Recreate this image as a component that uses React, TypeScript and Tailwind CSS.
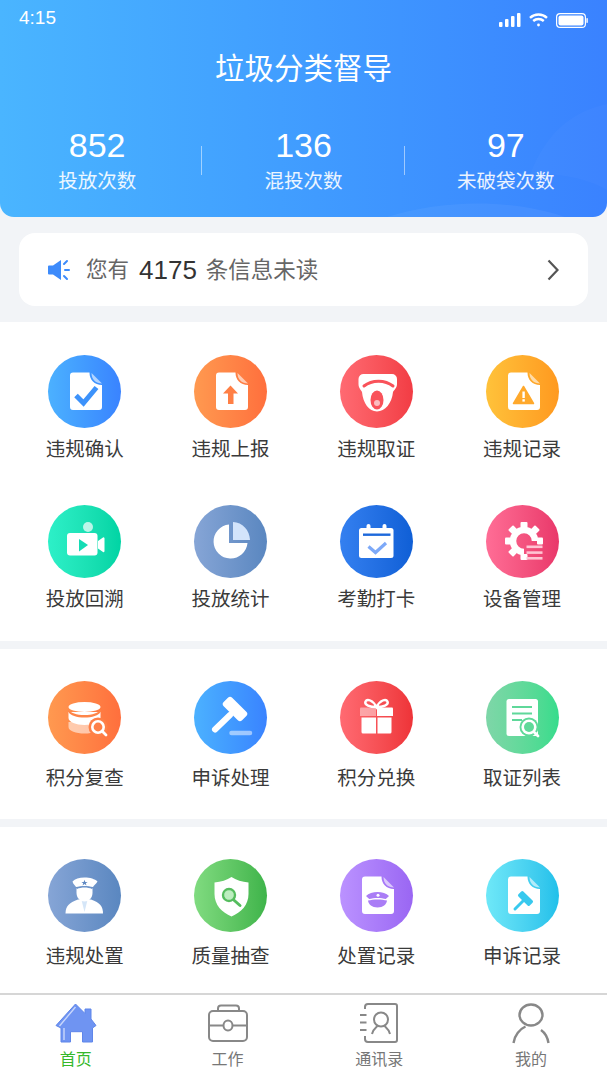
import React from 'react';

const Doc = ({ children }: { children?: React.ReactNode }) => (
  <>
    <path d="M25 17.5H41.5C41.5 25 46.5 30 54 30V52a3 3 0 0 1-3 3H25a3 3 0 0 1-3-3V20.5a3 3 0 0 1 3-3z" fill="#fff" />
    <path d="M43.5 18L54 28.5C48 28.5 43.5 24.5 43.5 18z" fill="#fff" opacity="0.6" />
    {children}
  </>
);

const gearTeeth = [0, 45, 90, 180, 225, 270, 315];

const icons: Record<string, React.ReactNode> = {
  confirm: (
    <Doc>
      <path d="M28 40.5L35.5 48L48.5 32.5" fill="none" stroke="#3c92fb" strokeWidth="5" />
    </Doc>
  ),
  upload: (
    <Doc>
      <path d="M36.5 30.5L44 38.5H39.5V49H34V38.5H29z" fill="#ff7f45" />
    </Doc>
  ),
  camera: (
    <>
      <path d="M24 19H52a5 5 0 0 1 5 5V29C57 33 54 35 53 37C52 48 45 56.5 37 56.5C29 56.5 23 48 22 37C21 35 18.5 33 18.5 29V24a5 5 0 0 1 5.5-5z" fill="#fff" />
      <path d="M24 31C32 24.5 45 24.5 53 31" fill="none" stroke="#f9525a" strokeWidth="3" strokeLinecap="round" />
      <ellipse cx="37" cy="45" rx="6.5" ry="9.5" fill="#f9525a" />
      <circle cx="37" cy="48" r="3" fill="#fbbcbf" />
    </>
  ),
  warn: (
    <>
      <Doc />
      <path d="M37.5 31.5L47.5 48.5H27.5z" fill="#ffa92c" stroke="#ffa92c" strokeWidth="1.5" strokeLinejoin="round" />
      <rect x="36.4" y="36.5" width="2.4" height="6.5" fill="#fff" />
      <rect x="36.4" y="44.2" width="2.4" height="2.4" fill="#fff" />
    </>
  ),
  video: (
    <>
      <circle cx="40" cy="22" r="5" fill="#fff" opacity="0.7" />
      <rect x="19" y="28" width="30.5" height="22.5" rx="3" fill="#fff" />
      <path d="M50 36L55 32.5a1 1 0 0 1 1.5 1V46a1 1 0 0 1-1.5 1L50 43.5z" fill="#fff" />
      <path d="M31 34V46.5L40 40z" fill="#14dcb4" />
    </>
  ),
  pie: (
    <>
      <path d="M35 19.5V38H53.5A17 17 0 1 1 35 19.5z" fill="#fff" />
      <path d="M39 17C48.5 17.5 55.5 25 56 35H39z" fill="#d3e4fb" />
    </>
  ),
  calendar: (
    <>
      <path d="M21.5 23H51a2.5 2.5 0 0 1 2.5 2.5V50.5a2.5 2.5 0 0 1-2.5 2.5H21.5a2.5 2.5 0 0 1-2.5-2.5V25.5a2.5 2.5 0 0 1 2.5-2.5z" fill="#fff" />
      <rect x="26.5" y="19" width="4" height="8" rx="2" fill="#fff" />
      <rect x="42.5" y="19" width="4" height="8" rx="2" fill="#fff" />
      <rect x="23" y="28.5" width="27.5" height="2.4" fill="#1d69db" />
      <path d="M28.5 41.5L35.5 47.5L46 38" fill="none" stroke="#7da9f8" strokeWidth="3.2" />
    </>
  ),
  gear: (
    <>
      <path d="M38 47A11 11 0 1 1 49 36" fill="none" stroke="#fff" strokeWidth="6.5" />
      {gearTeeth.map((a) => (
        <rect key={a} x="34.5" y="17" width="7" height="6" rx="1" fill="#fff" transform={`rotate(${a} 38 36)`} />
      ))}
      <rect x="40.5" y="40.5" width="16" height="2.6" fill="#ffc4d3" />
      <rect x="40.5" y="46.3" width="16" height="2.6" fill="#ffc4d3" />
      <rect x="40.5" y="52" width="16" height="2.6" fill="#ffc4d3" />
    </>
  ),
  database: (
    <>
      <path d="M20.5 41V46C20.5 50 28 52.5 36.5 52.5S52.5 50 52.5 46V41z" fill="#fff" opacity="0.55" />
      <path d="M20.5 31V37C20.5 41 28 44 36.5 44S52.5 41 52.5 37V31z" fill="#fff" />
      <ellipse cx="36.5" cy="26" rx="16" ry="5" fill="#fff" />
      <path d="M20.5 28.5C22 32 29 34 36.5 34S51 32 52.5 28.5V31C51 34.5 44 36.5 36.5 36.5S22 34.5 20.5 31z" fill="#fe8549" />
      <circle cx="50" cy="46" r="9.5" fill="#fe8047" />
      <circle cx="50" cy="46" r="5.7" fill="none" stroke="#fff" strokeWidth="2.6" />
      <path d="M54.5 50.5L58 54" stroke="#fff" strokeWidth="2.8" strokeLinecap="round" />
    </>
  ),
  gavel: (
    <>
      <rect x="28" y="22" width="26" height="12" rx="3" fill="#fff" transform="rotate(45 41 28)" />
      <path d="M21 48.5L36 34" stroke="#fff" strokeWidth="6" strokeLinecap="round" />
      <path d="M37.5 52H56" stroke="#fff" strokeWidth="4.5" strokeLinecap="round" opacity="0.5" />
    </>
  ),
  gift: (
    <>
      <path d="M36.5 26C33 19 27 17.5 25.5 20.5C24 24 30 26 36.5 26C43 26 49 24 47.5 20.5C46 17.5 40 19 36.5 26z" fill="none" stroke="#fff" strokeWidth="2.4" />
      <path d="M21 26.5H36V35H20V27.5a1 1 0 0 1 1-1z" fill="#fff" opacity="0.45" />
      <path d="M37 26.5H52a1 1 0 0 1 1 1V35H37z" fill="#fff" />
      <path d="M21.5 36.5H36V52.5H23a1.5 1.5 0 0 1-1.5-1.5z" fill="#fff" />
      <path d="M37.5 36.5H51.5V51a1.5 1.5 0 0 1-1.5 1.5H37.5z" fill="#fff" />
    </>
  ),
  list: (
    <>
      <rect x="20.5" y="18" width="31.5" height="37" rx="2.5" fill="#fff" />
      <path d="M26 26H46M26 32.5H46M26 39H36" stroke="#5fd89a" strokeWidth="2" />
      <circle cx="43" cy="46" r="9.5" fill="#5ed998" />
      <circle cx="43" cy="46" r="7.6" fill="#fff" />
      <circle cx="43" cy="46" r="5" fill="#5ed998" />
      <path d="M48.5 51.5L52 55" stroke="#fff" strokeWidth="2.8" strokeLinecap="round" />
    </>
  ),
  officer: (
    <>
      <path d="M17.5 54.5C17.5 47 21 44 30 40.5H43C52 44 55 47 55 54.5z" fill="#fff" />
      <path d="M33.5 41L36.5 53L39.5 41z" fill="#d5e6f8" />
      <path d="M28.5 28H44.5V34C44.5 39 40.5 42.5 36.5 42.5S28.5 39 28.5 34z" fill="#fff" />
      <path d="M29 30C33 28 40 28 44 30L46 27.5H27z" fill="#6d94c9" />
      <path d="M36.5 18.5C42 18.5 47 20 49.5 22.5C48 25 46 26 45 28C40 26.5 33 26.5 28 28C27 26 25 25 24.5 22.5C27 20 31 18.5 36.5 18.5z" fill="#fff" />
      <path d="M36.5 20.8L37.3 23H39.6L37.8 24.3L38.5 26.4L36.5 25.1L34.5 26.4L35.2 24.3L33.4 23H35.7z" fill="#5f89c2" />
    </>
  ),
  shield: (
    <>
      <path d="M37.5 18C42 21 48 23 54.5 23.5V35C54.5 46 47 53.5 37.5 57.5C28 53.5 20.5 46 20.5 35V23.5C27 23 33 21 37.5 18z" fill="#fff" />
      <circle cx="35" cy="36" r="5" fill="#bdeec0" />
      <circle cx="35" cy="36" r="6" fill="none" stroke="#55bd5e" strokeWidth="2.4" />
      <path d="M39.8 41L46 46.5" stroke="#55bd5e" strokeWidth="3" strokeLinecap="round" />
    </>
  ),
  capdoc: (
    <Doc>
      <path d="M37.5 33C42 33 46.5 34.5 49 37C47.5 38.5 46.5 39 46 40C41 38.5 34 38.5 29 40C28.5 39 27.5 38.5 26 37C28.5 34.5 33 33 37.5 33z" fill="#aa7df6" />
      <path d="M28 41.5C33 40 42 40 47 41.5C46.5 45.5 43 48.5 37.5 48.5S28.5 45.5 28 41.5z" fill="#aa7df6" />
      <circle cx="38" cy="36.3" r="1.5" fill="#fff" />
    </Doc>
  ),
  gaveldoc: (
    <Doc>
      <rect x="31.5" y="36" width="16" height="7" rx="1.5" fill="#38c9ee" transform="rotate(45 39.5 39.5)" />
      <path d="M29 50L37 42" stroke="#38c9ee" strokeWidth="3" strokeLinecap="round" />
    </Doc>
  ),
};

type Item = { label: string; icon: string; grad: string };

const group1: Item[] = [
  { label: '违规确认', icon: 'confirm', grad: 'from-[#4cb1ff] to-[#3a83ff]' },
  { label: '违规上报', icon: 'upload', grad: 'from-[#ff9950] to-[#ff6f3d]' },
  { label: '违规取证', icon: 'camera', grad: 'from-[#ff6a72] to-[#f23c44]' },
  { label: '违规记录', icon: 'warn', grad: 'from-[#ffc23a] to-[#ff991f]' },
  { label: '投放回溯', icon: 'video', grad: 'from-[#2df0c8] to-[#00d4a4]' },
  { label: '投放统计', icon: 'pie', grad: 'from-[#86a5d6] to-[#5a87c0]' },
  { label: '考勤打卡', icon: 'calendar', grad: 'from-[#3480f0] to-[#0f5fd6]' },
  { label: '设备管理', icon: 'gear', grad: 'from-[#ff6d96] to-[#e9376a]' },
];

const group2: Item[] = [
  { label: '积分复查', icon: 'database', grad: 'from-[#ff9950] to-[#ff6f3d]' },
  { label: '申诉处理', icon: 'gavel', grad: 'from-[#4cb1ff] to-[#3a83ff]' },
  { label: '积分兑换', icon: 'gift', grad: 'from-[#ff6a72] to-[#ee3338]' },
  { label: '取证列表', icon: 'list', grad: 'from-[#7ed6a8] to-[#35dc8c]' },
];

const group3: Item[] = [
  { label: '违规处置', icon: 'officer', grad: 'from-[#86a5d6] to-[#5a87c0]' },
  { label: '质量抽查', icon: 'shield', grad: 'from-[#80db80] to-[#3eb44a]' },
  { label: '处置记录', icon: 'capdoc', grad: 'from-[#bb92ff] to-[#9a66f3]' },
  { label: '申诉记录', icon: 'gaveldoc', grad: 'from-[#6ee8f8] to-[#1fc0ea]' },
];

const Cell = ({ item, labelClass }: { item: Item; labelClass: string }) => (
  <div className="flex flex-col items-center">
    <div className={`w-[73px] h-[73px] rounded-full bg-linear-to-r ${item.grad}`}>
      <svg width="73" height="73" viewBox="0 0 73 73">{icons[item.icon]}</svg>
    </div>
    <span className={`text-[19.5px] leading-[28px] text-[#3a3a3a] ${labelClass}`}>{item.label}</span>
  </div>
);

const stats = [
  { value: '852', label: '投放次数', extra: 'pr-2' },
  { value: '136', label: '混投次数', extra: '' },
  { value: '97', label: '未破袋次数', extra: '' },
];

const App: React.FC = () => {
  return (
    <div className="w-[607px] h-[1080px] overflow-hidden bg-[#f2f4f7] font-['Liberation_Sans','Noto_Sans_CJK_SC',sans-serif]">
      {/* Header */}
      <div className="relative h-[217px] rounded-b-[14px] overflow-hidden bg-linear-to-r from-[#4ab5ff] to-[#3a82ff] text-white">
        <svg className="absolute inset-0" width="607" height="217" viewBox="0 0 607 217">
          <path d="M387 217C440 200 510 198 565 217z" fill="#fff" opacity="0.05" />
          <path d="M607 104C570 112 545 135 530 175C560 172 590 180 607 190z" fill="#fff" opacity="0.025" />
        </svg>
        <div className="relative flex items-center justify-between px-[19px] h-[35px]">
          <span className="text-[19px] leading-none">4:15</span>
          <div className="flex items-center gap-[8px] mt-[5px]">
            <svg width="22" height="14" viewBox="0 0 22 14" fill="#fff">
              <rect x="0" y="9" width="3.5" height="5" rx="1" />
              <rect x="6" y="6" width="3.5" height="8" rx="1" />
              <rect x="12" y="3" width="3.5" height="11" rx="1" />
              <rect x="18" y="0" width="3.5" height="14" rx="1" />
            </svg>
            <svg width="19" height="14" viewBox="0 0 19 14" fill="none" stroke="#fff" strokeWidth="2.4">
              <path d="M1 4.8C5.8 0.4 13.2 0.4 18 4.8" />
              <path d="M4.2 8C7.2 5.3 11.8 5.3 14.8 8" />
              <circle cx="9.5" cy="12" r="1.4" fill="#fff" stroke="none" />
            </svg>
            <svg width="32" height="15" viewBox="0 0 32 15">
              <rect x="0.6" y="0.6" width="28.8" height="13.8" rx="3.5" fill="none" stroke="#fff" strokeWidth="1.2" />
              <rect x="2.5" y="2.5" width="25" height="10" rx="2" fill="#fff" />
              <rect x="30.4" y="5" width="1.4" height="5" rx="0.7" fill="#fff" />
            </svg>
          </div>
        </div>
        <h1 className="relative mt-[16px] text-center text-[29.5px] leading-[36px] font-normal">垃圾分类督导</h1>
        <div className="relative mt-[38px] grid grid-cols-3">
          {stats.map((s, i) => (
            <div key={s.value} className={`relative flex flex-col items-center ${s.extra}`}>
              <span className="text-[34px] leading-[40px]">{s.value}</span>
              <span className="mt-[3px] text-[19.5px] leading-[26px] text-white/90">{s.label}</span>
              {i < 2 && <div className="absolute right-0 top-[21px] w-px h-[29px] bg-white/50" />}
            </div>
          ))}
        </div>
      </div>

      {/* Notice */}
      <div className="mx-[19px] mt-4 h-[73px] rounded-[16px] bg-white flex items-center px-[29px]">
        <svg width="22" height="22" viewBox="0 0 22 22">
          <path d="M0 7.5a1 1 0 0 1 1-1H5L13 1V21L5 15.5H1a1 1 0 0 1-1-1z" fill="#3d8bfb" />
          <path d="M16 5L19 2M17 11H21M16 17L19 20" stroke="#3d8bfb" strokeWidth="2" strokeLinecap="round" />
        </svg>
        <span className="ml-4 mt-[2px] text-[21.5px] text-[#666]">您有</span>
        <span className="ml-[10px] mt-[2px] text-[26px] text-[#333]">4175</span>
        <span className="ml-[9px] mt-[2px] text-[22.5px] text-[#666]">条信息未读</span>
        <svg className="ml-auto" width="12" height="22" viewBox="0 0 12 22" fill="none" stroke="#555" strokeWidth="2.2">
          <path d="M1.5 1.5L10.5 11L1.5 20.5" />
        </svg>
      </div>

      {/* Menus */}
      <div className="mt-4 bg-white px-3 pt-[33px] pb-[28px] grid grid-cols-4 gap-y-[42px]">
        {group1.map((item) => (
          <Cell key={item.label} item={item} labelClass="mt-[7px]" />
        ))}
      </div>
      <div className="mt-2 bg-white px-3 pt-8 pb-[27px] grid grid-cols-4">
        {group2.map((item) => (
          <Cell key={item.label} item={item} labelClass="mt-[10px]" />
        ))}
      </div>
      <div className="mt-2 bg-white px-3 pt-8 pb-[23px] grid grid-cols-4">
        {group3.map((item) => (
          <Cell key={item.label} item={item} labelClass="mt-[10px]" />
        ))}
      </div>

      {/* Tab bar */}
      <div className="h-[87px] border-t-2 border-[#d6d6d6] bg-white grid grid-cols-4 pt-2">
        <div className="flex flex-col items-center">
          <svg width="44" height="41" viewBox="0 0 44 41">
            <path d="M21.5 1L31 10.5V6H37V16L42 22.5L38.5 25V39H28.5V28.7H16.5V39H7V25L2 22.5z" fill="#6f94f2" stroke="#5f86ea" strokeWidth="1" strokeLinejoin="round" />
            <path d="M21.5 4L5.5 23M10 25V37" stroke="#c9d7fb" strokeWidth="1.4" fill="none" />
          </svg>
          <span className="mt-[5px] text-[16px] leading-[22px] text-[#35b82a]">首页</span>
        </div>
        <div className="flex flex-col items-center">
          <svg width="44" height="41" viewBox="0 0 44 41" fill="none" stroke="#888" strokeWidth="2">
            <rect x="3" y="8" width="38" height="30" rx="4" />
            <path d="M12 8V5.5a3 3 0 0 1 3-3H30a3 3 0 0 1 3 3V8" />
            <path d="M3 22.5H17.5M26.5 22.5H41" />
            <ellipse cx="22" cy="22.5" rx="4.5" ry="5" />
          </svg>
          <span className="mt-[5px] text-[16px] leading-[22px] text-[#777]">工作</span>
        </div>
        <div className="flex flex-col items-center">
          <svg width="40" height="41" viewBox="0 0 40 41" fill="none" stroke="#888" strokeWidth="2">
            <path d="M6 6V4a3 3 0 0 1 3-3H36a2 2 0 0 1 2 2V37a2 2 0 0 1-2 2H9a3 3 0 0 1-3-3V33" />
            <path d="M1 12H7.5M1 19.5H7.5M1 27H7.5" />
            <circle cx="22" cy="16.5" r="7" />
            <path d="M13 31C14 26.5 17 24.5 18.5 23M31 31C30 26.5 27 24.5 25.5 23" />
          </svg>
          <span className="mt-[5px] text-[16px] leading-[22px] text-[#777]">通讯录</span>
        </div>
        <div className="flex flex-col items-center">
          <svg width="40" height="41" viewBox="0 0 40 41" fill="none" stroke="#888" strokeWidth="2.4">
            <ellipse cx="20" cy="12" rx="11.5" ry="10.5" />
            <path d="M2.5 40C3.5 32 9 26 14.5 23.5" />
            <path d="M37.5 40C36.5 33.5 33.5 29.5 30 27" />
          </svg>
          <span className="mt-[5px] text-[16px] leading-[22px] text-[#777]">我的</span>
        </div>
      </div>
    </div>
  );
};

export default App;
